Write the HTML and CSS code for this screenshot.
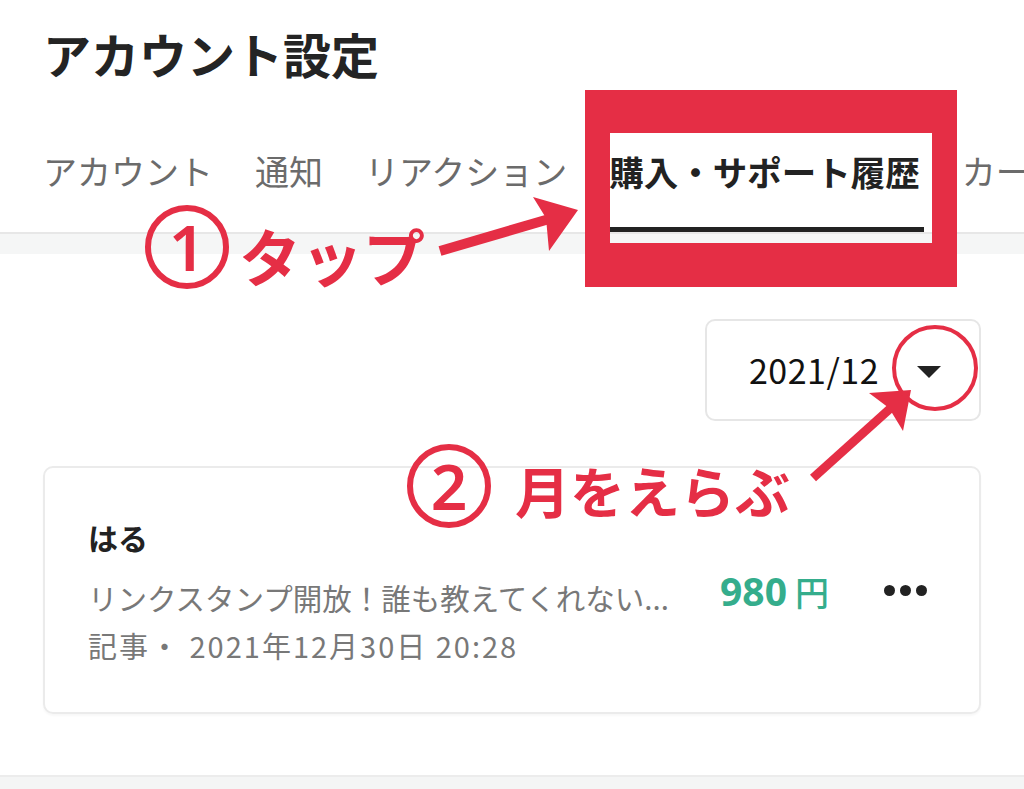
FILE: index.html
```html
<!DOCTYPE html>
<html lang="ja">
<head>
<meta charset="utf-8">
<title>アカウント設定</title>
<link rel="stylesheet" href="styles.css">
</head>
<body>
<div class="page">
  <header class="header">
    <h1 class="title">アカウント設定</h1>
  </header>
  <nav class="tabs">
    <a class="tab">アカウント</a>
    <a class="tab">通知</a>
    <a class="tab">リアクション</a>
    <a class="tab active">購入・サポート履歴</a>
    <a class="tab">カード</a>
  </nav>
  <div class="band"></div>
  <main class="content">
    <div class="select-row">
      <div class="select">
        <span class="select-value">2021/12</span>
        <span class="caret"></span>
      </div>
    </div>
    <div class="card">
      <div class="card-body">
        <div class="card-name">はる</div>
        <div class="card-desc">リンクスタンプ開放！誰も教えてくれない...</div>
        <div class="card-meta">記事・ 2021年12月30日 20:28</div>
      </div>
      <div class="price"><span class="price-num">980</span><span class="price-unit">円</span></div>
      <div class="more"><span></span><span></span><span></span></div>
    </div>
  </main>
  <div class="footer-band"></div>

  <div class="hl-box"></div>
  <svg class="overlay" width="1024" height="789" viewBox="0 0 1024 789">
    <line x1="440" y1="251" x2="556" y2="217" stroke="#e52e45" stroke-width="10" stroke-linecap="butt"/>
    <polygon points="578,210 533,197 546,218 549,251" fill="#e52e45"/>
    <line x1="813" y1="478" x2="893" y2="406" stroke="#e52e45" stroke-width="9"/>
    <polygon points="911,390 869,393 889,408 903,431" fill="#e52e45"/>
    <circle cx="935" cy="368" r="41" fill="none" stroke="#e52e45" stroke-width="4"/>
  </svg>
  <div class="note note1"><span class="num">1</span><span class="note-text t1">タップ</span></div>
  <div class="note note2"><span class="num">2</span><span class="note-text t2">月をえらぶ</span></div>
</div>
</body>
</html>
```
FILE: styles.css
```css
html, body {
  margin: 0;
  padding: 0;
  background: #fff;
}
body {
  font-family: "Noto Sans CJK JP", "Noto Sans", sans-serif;
  color: #222;
  overflow: hidden;
}
.page {
  position: relative;
  width: 1024px;
  height: 789px;
  overflow: hidden;
  display: flex;
  flex-direction: column;
}
.header {
  padding: 19px 43px 0;
}
.title {
  margin: 0;
  font-size: 48px;
  line-height: 68px;
  font-weight: 700;
  color: #242424;
}
.tabs {
  display: flex;
  gap: 34px;
  padding-left: 39px;
  white-space: nowrap;
  border-bottom: 2px solid #e7e7e7;
  overflow: hidden;
}
.tab {
  flex-shrink: 0;
  padding: 61px 4px 33px;
  font-size: 34px;
  line-height: 46px;
  color: #6b6b6b;
  border-bottom: 5px solid transparent;
}
.tab.active {
  color: #222;
  font-weight: 700;
  font-size: 34.5px;
  border-bottom-color: #222;
}
.band {
  height: 20px;
  background: #f5f6f6;
}
.content {
  padding: 65px 43px 0;
}
.select-row {
  display: flex;
  justify-content: flex-end;
}
.select {
  width: 276px;
  height: 102px;
  box-sizing: border-box;
  border: 2px solid #e6e6e6;
  border-radius: 10px;
  display: flex;
  align-items: center;
  padding-left: 42px;
  gap: 38px;
}
.select-value {
  font-size: 34px;
  color: #111;
  line-height: 1;
  letter-spacing: 0.5px;
}
.caret {
  width: 0;
  height: 0;
  border-left: 12px solid transparent;
  border-right: 12px solid transparent;
  border-top: 12px solid #222;
  margin-top: 4px;
}
.card {
  margin-top: 45px;
  height: 248px;
  box-sizing: border-box;
  border: 2px solid #ebebeb;
  border-radius: 10px;
  box-shadow: 0 2px 2px rgba(0,0,0,0.03);
  display: flex;
  align-items: center;
  padding: 0 52px 0 43px;
}
.card-body {
  flex: 1;
  min-width: 0;
}
.card-name {
  font-size: 30px;
  line-height: 42px;
  font-weight: 700;
  color: #222;
}
.card-desc {
  margin-top: 19px;
  font-size: 29.5px;
  line-height: 40px;
  color: #787878;
  white-space: nowrap;
}
.card-meta {
  margin-top: 8px;
  font-size: 29px;
  line-height: 40px;
  color: #787878;
  white-space: nowrap;
  letter-spacing: 2px;
}
.price {
  color: #35ad8c;
  display: flex;
  align-items: baseline;
  gap: 8px;
}
.price-num {
  font-size: 39px;
  font-weight: 700;
  font-family: "Noto Sans", "Noto Sans CJK JP", sans-serif;
}
.price-unit {
  font-size: 34px;
  font-weight: 500;
}
.more {
  margin-left: 55px;
  display: flex;
  gap: 5px;
}
.more span {
  width: 11px;
  height: 11px;
  border-radius: 50%;
  background: #222;
}
.footer-band {
  margin-top: 61px;
  flex: 1;
  border-top: 2px solid #ececec;
  background: #f4f5f5;
}
.hl-box {
  position: absolute;
  left: 585px;
  top: 90px;
  width: 372px;
  height: 197px;
  box-sizing: border-box;
  border-style: solid;
  border-color: #e52e45;
  border-width: 43px 25px 44px 25px;
}
.overlay {
  position: absolute;
  left: 0;
  top: 0;
  pointer-events: none;
}
.note {
  position: absolute;
  display: flex;
  align-items: center;
  color: #e52e45;
  font-weight: 700;
}
.note1 {
  left: 145px;
  top: 205px;
}
.note2 {
  left: 407px;
  top: 444px;
}
.num {
  width: 84px;
  height: 84px;
  box-sizing: border-box;
  border: 6px solid #e52e45;
  border-radius: 50%;
  display: flex;
  align-items: center;
  justify-content: center;
  font-family: "Noto Sans", sans-serif;
  font-size: 64px;
  line-height: 1;
  font-weight: 600;
}
.note-text {
  line-height: 1;
}
.t1 {
  font-size: 62px;
  margin-left: 10px;
  margin-top: 16px;
}
.t2 {
  font-size: 55px;
  margin-left: 24px;
  margin-top: 6px;
}
```
